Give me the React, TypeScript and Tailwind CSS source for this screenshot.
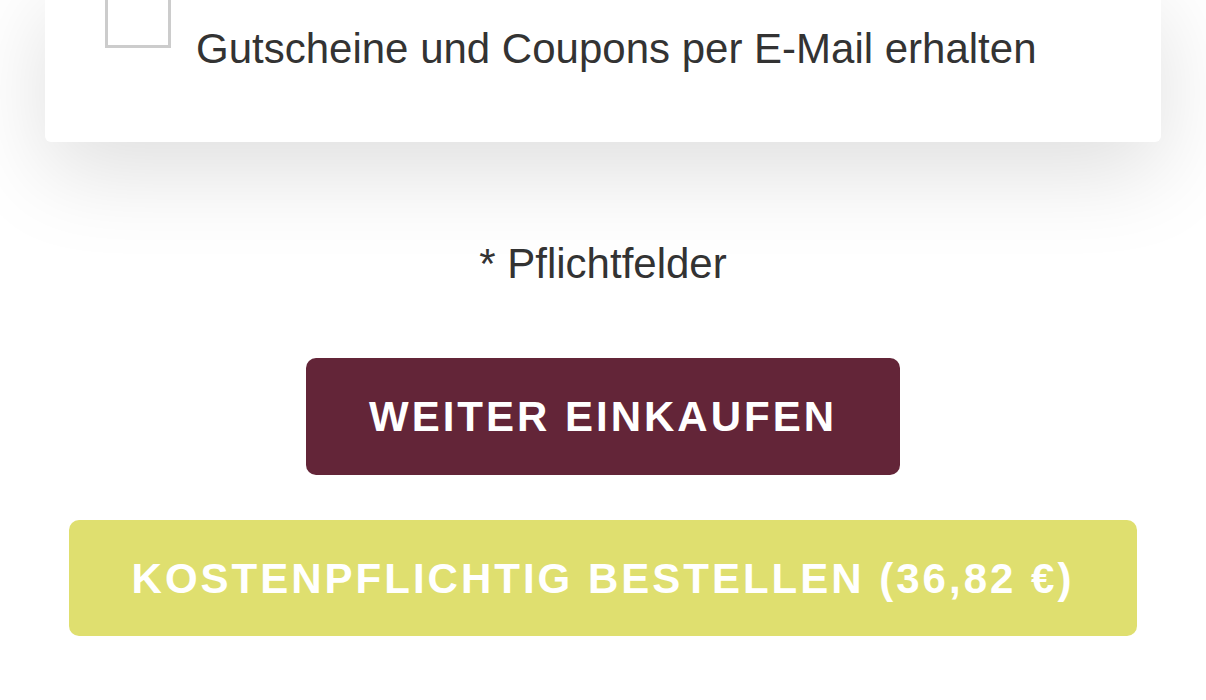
export default function App() {
  return (
    <div
      className="min-h-[700px] overflow-hidden bg-white text-[#333]"
      style={{ fontFamily: '"Liberation Sans", Arial, sans-serif' }}
    >
      <div className="-mt-[18px] mx-[45px] rounded-b-md bg-white pb-[62px] shadow-[0_30px_90px_rgba(0,0,0,0.13)]">
        <label className="flex items-start pl-[60px]">
          <span className="h-[66px] w-[66px] shrink-0 border-[3px] border-[#cccccc] bg-white" />
          <span className="ml-[25px] mt-[35px] text-[42px] leading-[63px]">
            Gutscheine und Coupons per E-Mail erhalten
          </span>
        </label>
      </div>

      <p className="mt-[90px] text-center text-[42px] leading-[63px]">* Pflichtfelder</p>

      <div className="mt-[63px] flex justify-center">
        <button className="h-[117px] w-[594px] rounded-[10px] bg-[#632538] text-[42px] font-bold tracking-[3px] text-white">
          WEITER EINKAUFEN
        </button>
      </div>

      <div className="mx-[69px] mt-[45px]">
        <button className="h-[116px] w-full rounded-[10px] bg-[#dfdf6f] text-[42px] font-bold tracking-[3px] text-white">
          KOSTENPFLICHTIG BESTELLEN (36,82 €)
        </button>
      </div>
    </div>
  );
}
